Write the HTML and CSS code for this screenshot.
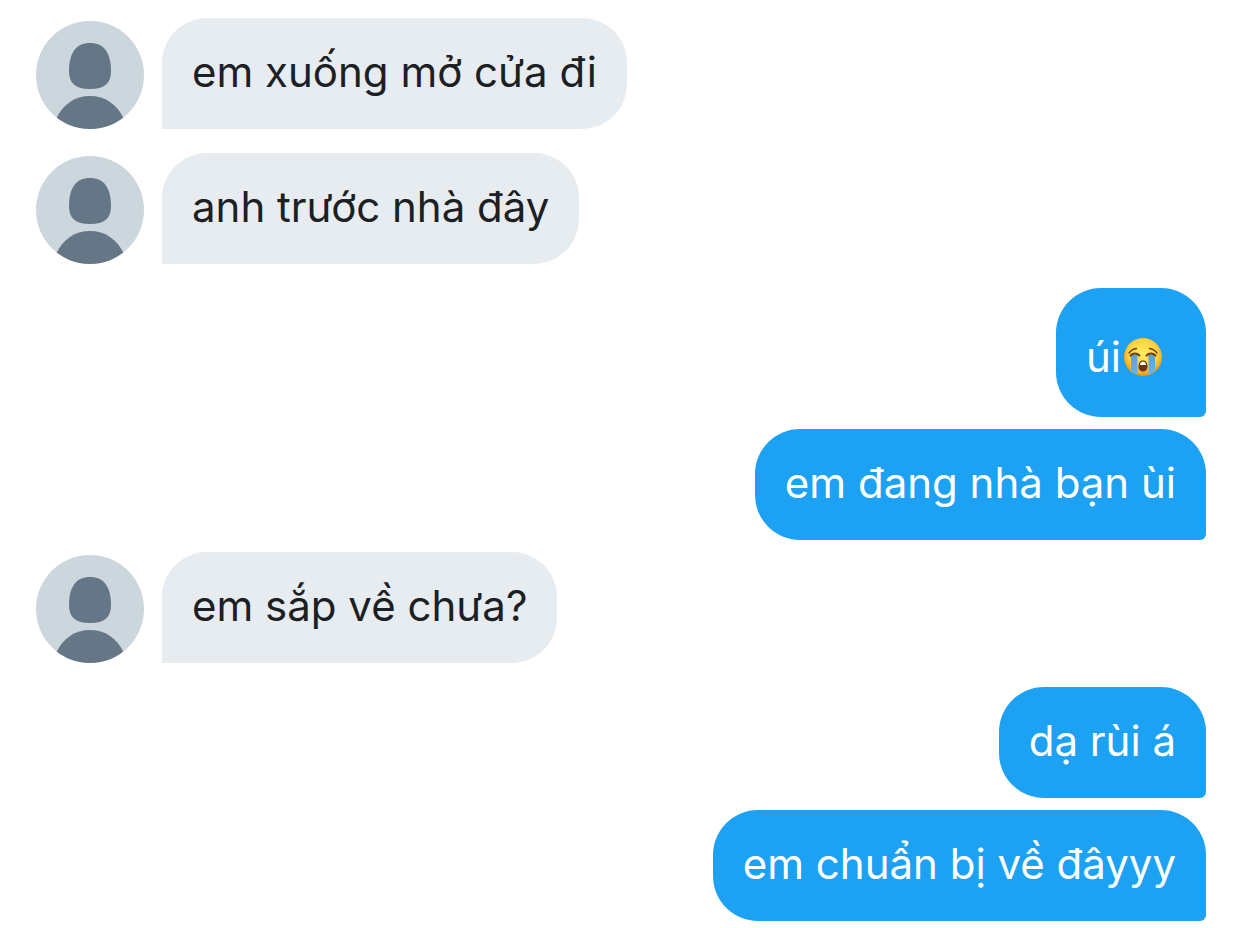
FILE: index.html
```html
<!DOCTYPE html>
<html lang="vi">
<head>
  <meta charset="UTF-8" />
  <meta name="viewport" content="width=device-width, initial-scale=1" />
  <title>Tin nhắn</title>
  <link rel="stylesheet" href="styles.css">
</head>
<body>

  <svg class="defs" aria-hidden="true">
    <defs>
      <clipPath id="round"><circle cx="54" cy="54" r="54" /></clipPath>
    </defs>
    <symbol id="person" viewBox="0 0 108 108">
      <g clip-path="url(#round)">
        <rect width="108" height="108" fill="#ccd6dd" />
        <path fill="#657786" d="M54 22C40 22 33 32 33 50C33 62 39 68 54 68C69 68 75 62 75 50C75 32 68 22 54 22Z" />
        <path fill="#657786" d="M54 75C39 75 27 83 20 98V108H88V98C81 83 69 75 54 75Z" />
      </g>
    </symbol>
  </svg>

  <main class="chat">
    <div class="message received">
      <svg class="avatar" role="img" aria-label="Anh"><use href="#person" /></svg>
      <p class="bubble">em xuống mở cửa đi</p>
    </div>

    <div class="message received">
      <svg class="avatar" role="img" aria-label="Anh"><use href="#person" /></svg>
      <p class="bubble">anh trước nhà đây</p>
    </div>

    <div class="message sent">
      <p class="bubble with-emoji">úi<svg class="emoji" viewBox="0 0 40 40" role="img" aria-label="khóc">
          <defs>
            <radialGradient id="face" cx="50%" cy="42%" r="58%">
              <stop offset="0" stop-color="#ffec62" />
              <stop offset="0.65" stop-color="#fed43e" />
              <stop offset="1" stop-color="#e8921f" />
            </radialGradient>
            <linearGradient id="tear" x1="0" y1="0" x2="0" y2="1">
              <stop offset="0" stop-color="#5d9fd6" />
              <stop offset="1" stop-color="#68b5ee" />
            </linearGradient>
          </defs>
          <circle cx="20" cy="20" r="19" fill="url(#face)" />
          <!-- tears -->
          <path fill="url(#tear)" d="M8 18H14.500V37.500Q11 36.500 8 34Z" />
          <path fill="url(#tear)" d="M25.500 18H32V34Q29 36.500 25.500 37.500Z" />
          <!-- brows and closed eyes -->
          <g fill="none" stroke="#6b3a10" stroke-linecap="round">
            <path stroke-width="1.300" d="M6 16Q9 12 13.500 11.500" />
            <path stroke-width="1.300" d="M34 16Q31 12 26.500 11.500" />
            <path stroke-width="2" d="M7.500 18.500Q12 14.500 16.500 18.500" />
            <path stroke-width="2" d="M23.500 18.500Q28 14.500 32.500 18.500" />
          </g>
          <!-- mouth -->
          <path fill="#6b3410" d="M20 23.500C17 23.500 15.500 26 15.500 29.500C15.500 33 17.500 34.500 20 34.500C22.500 34.500 24.500 33 24.500 29.500C24.500 26 23 23.500 20 23.500Z" />
          <path fill="#fff" d="M17 27Q18 24.500 20 24.500Q22 24.500 23 27V28H17Z" />
        </svg></p>
    </div>
    <div class="message sent">
      <p class="bubble">em đang nhà bạn ùi</p>
    </div>

    <div class="message received">
      <svg class="avatar" role="img" aria-label="Anh"><use href="#person" /></svg>
      <p class="bubble">em sắp về chưa?</p>
    </div>

    <div class="message sent">
      <p class="bubble">dạ rùi á</p>
    </div>
    <div class="message sent">
      <p class="bubble">em chuẩn bị về đâyyy</p>
    </div>
  </main>

</body>
</html>
```
FILE: styles.css
```css
body {
  margin: 0;
  background: #fff;
  color: #1c1f24;
  font-family: Inter, "Noto Sans", sans-serif;
  font-size: 42px;
  line-height: 50px;
}
.defs {
  position: absolute;
  width: 0;
  height: 0;
}
.chat {
  padding: 18px 36px 7px;
}
.message {
  display: flex;
  align-items: flex-end;
  gap: 18px;
}
.received {
  margin-bottom: 24px;
}
.sent {
  justify-content: flex-end;
  margin-bottom: 12px;
}
.avatar {
  flex: none;
  width: 108px;
  height: 108px;
}
.bubble {
  margin: 0;
  padding: 29px 30px 32px;
  background: #e6ecf0;
  border-radius: 45px 45px 45px 0;
}
.sent .bubble {
  background: #1da1f2;
  color: #fff;
  border-radius: 45px 45px 6px 45px;
}
.sent .with-emoji {
  padding: 44px 43px 35px 30px;
}
.emoji {
  width: 40px;
  height: 40px;
  margin-left: 2px;
  vertical-align: -5px;
}
```
